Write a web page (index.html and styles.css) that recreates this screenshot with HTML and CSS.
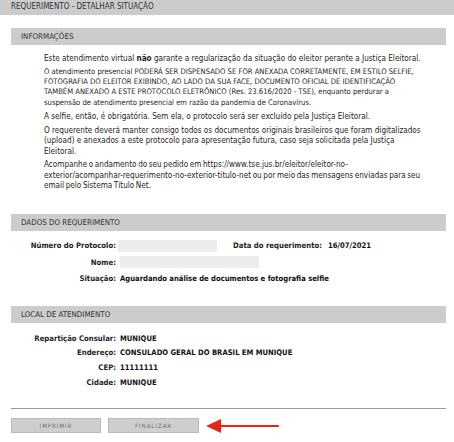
FILE: index.html
```html
<!DOCTYPE html>
<html lang="pt-BR">
<head>
<meta charset="utf-8">
<title>Requerimento - Detalhar Situação</title>
<link rel="stylesheet" href="styles.css">
</head>
<body>
<div class="page-title">REQUERIMENTO - DETALHAR SITUAÇÃO</div>
<div class="content">
  <div class="section-header sh-info">INFORMAÇÕES</div>
  <div class="info-body">
    <p>Este atendimento virtual <b>não</b> garante a regularização da situação do eleitor perante a Justiça Eleitoral.</p>
    <p class="notice">O atendimento presencial PODERÁ SER DISPENSADO SE FOR ANEXADA CORRETAMENTE, EM ESTILO SELFIE, FOTOGRAFIA DO ELEITOR EXIBINDO, AO LADO DA SUA FACE, DOCUMENTO OFICIAL DE IDENTIFICAÇÃO TAMBÉM ANEXADO A ESTE PROTOCOLO ELETRÔNICO (Res. 23.616/2020 - TSE), enquanto perdurar a suspensão de atendimento presencial em razão da pandemia de Coronavírus.</p>
    <p>A selfie, então, é obrigatória. Sem ela, o protocolo será ser excluído pela Justiça Eleitoral.</p>
    <p>O requerente deverá manter consigo todos os documentos originais brasileiros que foram digitalizados (upload) e anexados a este protocolo para apresentação futura, caso seja solicitada pela Justiça Eleitoral.</p>
    <p class="follow">Acompanhe o andamento do seu pedido em https://www.tse.jus.br/eleitor/eleitor-no-exterior/acompanhar-requerimento-no-exterior-titulo-net ou por meio das mensagens enviadas para seu email pelo Sistema Título Net.</p>
  </div>

  <div class="section-header sh-dados">DADOS DO REQUERIMENTO</div>
  <div class="fields fields-dados">
    <div class="label">Número do Protocolo:</div>
    <div class="value row-flex">
      <span class="blank blank-protocolo"></span>
      <span class="label inline-label">Data do requerimento:</span>
      <span class="strong">16/07/2021</span>
    </div>
    <div class="label">Nome:</div>
    <div class="value row-flex"><span class="blank blank-nome"></span></div>
    <div class="label">Situação:</div>
    <div class="value strong">Aguardando análise de documentos e fotografia selfie</div>
  </div>

  <div class="section-header sh-local">LOCAL DE ATENDIMENTO</div>
  <div class="fields fields-local">
    <div class="label">Repartição Consular:</div>
    <div class="value strong">MUNIQUE</div>
    <div class="label">Endereço:</div>
    <div class="value strong">CONSULADO GERAL DO BRASIL EM MUNIQUE</div>
    <div class="label">CEP:</div>
    <div class="value strong">11111111</div>
    <div class="label">Cidade:</div>
    <div class="value strong">MUNIQUE</div>
  </div>

  <div class="divider"></div>
  <div class="actions">
    <button class="btn btn-imprimir" type="button">IMPRIMIR</button>
    <button class="btn btn-finalizar" type="button">FINALIZAR</button>
    <svg class="arrow" width="74" height="16" viewBox="0 0 74 16" aria-hidden="true">
      <line x1="12" y1="8" x2="72" y2="8" stroke="#e8241a" stroke-width="2.2" stroke-linecap="round"/>
      <polygon points="0,8 15,1 15,15" fill="#e8241a"/>
    </svg>
  </div>
</div>
</body>
</html>
```

FILE: styles.css
```css
html, body {
  margin: 0;
  padding: 0;
  background: #ffffff;
}

body {
  font-family: "DejaVu Sans Condensed", "DejaVu Sans", Verdana, sans-serif;
  font-size: 7.6px;
  color: #1e1e1e;
}

.page-title {
  background: #cccccc;
  height: 15px;
  line-height: 14px;
  padding-left: 11px;
  color: #333333;
  font-size: 8px;
}

.content {
  padding: 0 8px 0 11px;
}

.section-header {
  background: #cccccc;
  height: 17px;
  line-height: 17px;
  padding-left: 10px;
  color: #333333;
  font-size: 7.9px;
}

.sh-info {
  margin-top: 13px;
}

.info-body {
  padding: 8px 22px 0 33px;
}

.info-body p {
  margin: 0 0 3.2px 0;
  line-height: 10.4px;
  font-size: 8.1px;
}

.info-body p.notice {
  font-size: 7.6px;
}

.info-body p.follow {
  word-spacing: -0.7px;
}

.info-body b {
  font-weight: bold;
}

.sh-dados {
  margin-top: 23px;
}

.fields {
  display: grid;
  grid-template-columns: 105px 1fr;
  column-gap: 4px;
  align-items: center;
}

.fields-dados {
  padding-top: 9px;
  row-gap: 4.5px;
}

.fields-dados > div {
  min-height: 12px;
  display: flex;
  align-items: center;
}

.fields-dados > .label {
  justify-content: flex-end;
}

.fields-local {
  padding-top: 11px;
  row-gap: 4.4px;
}

.fields-local > div {
  line-height: 10.3px;
}

.label {
  text-align: right;
  color: #1e1e1e;
  font-weight: bold;
  font-size: 7.7px;
}

.strong {
  font-weight: bold;
  color: #111111;
  font-size: 7.6px;
}

.row-flex {
  display: flex;
  align-items: center;
}

.blank {
  display: inline-block;
  height: 12px;
  background: #ececec;
}

.blank-protocolo {
  width: 99px;
  margin-left: -2px;
}

.blank-nome {
  width: 139px;
}

.inline-label {
  margin-left: 16px;
  margin-right: 6px;
}

.sh-local {
  margin-top: 21px;
}

.divider {
  margin-top: 20px;
  height: 1px;
  background: #9a9a9a;
}

.actions {
  display: flex;
  align-items: center;
  padding-top: 9px;
}

.btn {
  height: 15px;
  width: 90px;
  margin: 0 7px 0 0;
  padding: 0;
  background: #cecece;
  border: 1px solid #b8b8b8;
  color: #6a6a6a;
  font-family: "DejaVu Sans Condensed", "DejaVu Sans", Verdana, sans-serif;
  font-size: 6px;
  letter-spacing: 1px;
  line-height: 13px;
}

.btn-finalizar {
  width: 91px;
}

.arrow {
  display: block;
  margin-left: 0;
}
```
